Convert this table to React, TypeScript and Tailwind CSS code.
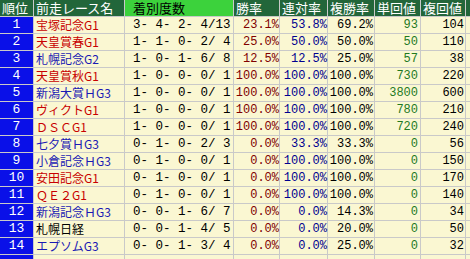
import React from 'react';

type Row = {
  rank: number;
  race: string;
  grade: 'g1' | 'g23' | 'none';
  record: string;
  win: string;
  quinella: string;
  show: string;
  winReturn: string;
  showReturn: string;
};

const rows: Row[] = [
  { rank: 1, race: '宝塚記念G1', grade: 'g1', record: '3- 4- 2- 4/13', win: '23.1%', quinella: '53.8%', show: '69.2%', winReturn: '93', showReturn: '104' },
  { rank: 2, race: '天皇賞春G1', grade: 'g1', record: '1- 1- 0- 2/ 4', win: '25.0%', quinella: '50.0%', show: '50.0%', winReturn: '50', showReturn: '110' },
  { rank: 3, race: '札幌記念G2', grade: 'g23', record: '1- 0- 1- 6/ 8', win: '12.5%', quinella: '12.5%', show: '25.0%', winReturn: '57', showReturn: '38' },
  { rank: 4, race: '天皇賞秋G1', grade: 'g1', record: '1- 0- 0- 0/ 1', win: '100.0%', quinella: '100.0%', show: '100.0%', winReturn: '730', showReturn: '220' },
  { rank: 5, race: '新潟大賞ＨG3', grade: 'g23', record: '1- 0- 0- 0/ 1', win: '100.0%', quinella: '100.0%', show: '100.0%', winReturn: '3800', showReturn: '600' },
  { rank: 6, race: 'ヴィクトG1', grade: 'g1', record: '1- 0- 0- 0/ 1', win: '100.0%', quinella: '100.0%', show: '100.0%', winReturn: '780', showReturn: '210' },
  { rank: 7, race: 'ＤＳＣG1', grade: 'g1', record: '1- 0- 0- 0/ 1', win: '100.0%', quinella: '100.0%', show: '100.0%', winReturn: '720', showReturn: '240' },
  { rank: 8, race: '七夕賞ＨG3', grade: 'g23', record: '0- 1- 0- 2/ 3', win: '0.0%', quinella: '33.3%', show: '33.3%', winReturn: '0', showReturn: '56' },
  { rank: 9, race: '小倉記念ＨG3', grade: 'g23', record: '0- 1- 0- 0/ 1', win: '0.0%', quinella: '100.0%', show: '100.0%', winReturn: '0', showReturn: '150' },
  { rank: 10, race: '安田記念G1', grade: 'g1', record: '0- 1- 0- 0/ 1', win: '0.0%', quinella: '100.0%', show: '100.0%', winReturn: '0', showReturn: '170' },
  { rank: 11, race: 'ＱＥ２G1', grade: 'g1', record: '0- 1- 0- 0/ 1', win: '0.0%', quinella: '100.0%', show: '100.0%', winReturn: '0', showReturn: '140' },
  { rank: 12, race: '新潟記念ＨG3', grade: 'g23', record: '0- 0- 1- 6/ 7', win: '0.0%', quinella: '0.0%', show: '14.3%', winReturn: '0', showReturn: '34' },
  { rank: 13, race: '札幌日経', grade: 'none', record: '0- 0- 1- 4/ 5', win: '0.0%', quinella: '0.0%', show: '20.0%', winReturn: '0', showReturn: '50' },
  { rank: 14, race: 'エプソムG3', grade: 'g23', record: '0- 0- 1- 3/ 4', win: '0.0%', quinella: '0.0%', show: '25.0%', winReturn: '0', showReturn: '32' },
];

const raceColor = {
  g1: 'text-[#c80000]',
  g23: 'text-[#1a1ab4]',
  none: 'text-black',
};

const jp = "font-['Noto_Sans_CJK_JP',sans-serif]";
const mono = "font-['Liberation_Mono','Noto_Sans_CJK_JP',monospace]";
const cell = 'h-4 leading-4 bg-[#faf7d2] whitespace-pre';
const head = `h-4 leading-4 text-[13px] text-white bg-[#22663a] pl-[2px] whitespace-nowrap ${jp}`;

const App = () => {
  return (
    <div className="w-[470px] h-[259px] overflow-hidden bg-white">
      <div className="grid w-[540px] grid-cols-[33px_90px_108px_45px_47px_46px_45px_44px_60px] gap-px bg-[#c9c9c9]">
        <div className={head}>順位</div>
        <div className={head}>前走レース名</div>
        <div className={`h-4 leading-4 text-[13px] text-black bg-[#3cd23c] pl-2 ${jp}`}>着別度数</div>
        <div className={head}>勝率</div>
        <div className={head}>連対率</div>
        <div className={head}>複勝率</div>
        <div className={head}>単回値</div>
        <div className={head}>複回値</div>
        <div className={head}></div>

        {rows.map((r) => (
          <React.Fragment key={r.rank}>
            <div className={`h-4 leading-4 bg-[#0a10e8] text-white text-center text-[13px] ${mono}`}>{r.rank}</div>
            <div className={`${cell} pl-[2px] text-[12px] ${jp} ${raceColor[r.grade]}`}>{r.race}</div>
            <div className={`${cell} pl-2 text-[12.5px] text-black ${mono}`}>{r.record}</div>
            <div className={`${cell} text-right text-[12px] text-[#800000] ${mono}`}>{r.win}</div>
            <div className={`${cell} text-right text-[12px] text-[#000090] ${mono}`}>{r.quinella}</div>
            <div className={`${cell} text-right pr-[1px] text-[12px] text-black ${mono}`}>{r.show}</div>
            <div className={`${cell} text-right pr-[2px] text-[12px] text-[#1f7a1f] ${mono}`}>{r.winReturn}</div>
            <div className={`${cell} text-right pr-[1px] text-[12px] text-black ${mono}`}>{r.showReturn}</div>
            <div className={cell}></div>
          </React.Fragment>
        ))}

        <div className="h-4 bg-[#0a10e8]"></div>
        <div className={cell}></div>
        <div className={cell}></div>
        <div className={cell}></div>
        <div className={cell}></div>
        <div className={cell}></div>
        <div className={cell}></div>
        <div className={cell}></div>
        <div className={cell}></div>
      </div>
    </div>
  );
};

export default App;
